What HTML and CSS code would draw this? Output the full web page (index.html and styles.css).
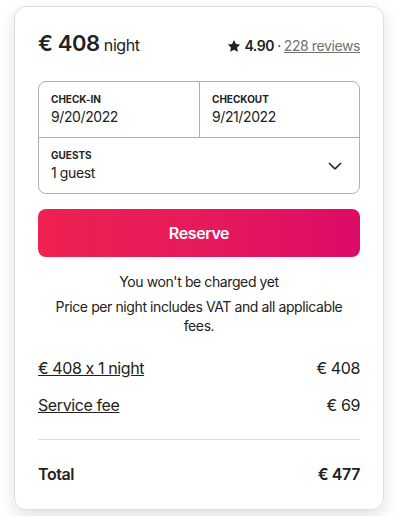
FILE: index.html
```html
<!DOCTYPE html>
<html>
<head>
<meta charset="utf-8">
<link rel="stylesheet" href="styles.css">
</head>
<body>
<div class="card">
  <div class="head">
    <div class="price"><span class="amount">€ 408</span> <span class="per">night</span></div>
    <div class="rating">
      <svg class="star" viewBox="0 0 32 32" width="12" height="12"><path d="M15.094 1.579l-4.124 8.885-9.86 1.27a1 1 0 0 0-.542 1.736l7.293 6.565-1.965 9.852a1 1 0 0 0 1.483 1.061L16 25.951l8.625 4.997a1 1 0 0 0 1.482-1.06l-1.965-9.853 7.293-6.565a1 1 0 0 0-.541-1.735l-9.86-1.271-4.127-8.885a1 1 0 0 0-1.814 0z" fill="#222"/></svg>
      <span class="score">4.90</span><span class="dot">·</span><a class="reviews">228 reviews</a>
    </div>
  </div>
  <div class="box">
    <div class="dates">
      <div class="cell">
        <div class="label">CHECK-IN</div>
        <div class="value">9/20/2022</div>
      </div>
      <div class="cell right">
        <div class="label">CHECKOUT</div>
        <div class="value">9/21/2022</div>
      </div>
    </div>
    <div class="guests">
      <div>
        <div class="label">GUESTS</div>
        <div class="value">1 guest</div>
      </div>
      <svg class="chev" viewBox="0 0 32 32" width="16" height="16"><path d="M28 12 16.7 23.3a1 1 0 0 1-1.4 0L4 12" fill="none" stroke="#222" stroke-width="3"/></svg>
    </div>
  </div>
  <button class="reserve">Reserve</button>
  <p class="note">You won't be charged yet</p>
  <p class="note vat">Price per night includes VAT and all applicable fees.</p>
  <div class="line first"><a>€ 408 x 1 night</a><span>€ 408</span></div>
  <div class="line"><a>Service fee</a><span>€ 69</span></div>
  <div class="total"><span>Total</span><span>€ 477</span></div>
</div>
</body>
</html>
```

FILE: styles.css
```css
* { box-sizing: border-box; }
html, body { margin: 0; background: #fff; }
body {
  padding: 6px 20px 8px 14px;
  font-family: Inter, "Noto Sans", sans-serif;
  font-feature-settings: "calt" 0;
  letter-spacing: -0.025em;
  color: #222;
}
.card {
  width: 370px;
  border: 1px solid #dddddd;
  border-radius: 12px;
  padding: 23px 23px 25px;
  box-shadow: rgba(0, 0, 0, 0.12) 0 6px 16px;
}
.head {
  display: flex;
  justify-content: space-between;
  align-items: baseline;
  height: 28px;
  margin-bottom: 23px;
}
.amount { font-size: 22px; font-weight: 600; }
.per { font-size: 16px; }
.rating { font-size: 14px; display: flex; align-items: baseline; }
.star { margin-right: 4px; align-self: center; }
.score { font-weight: 600; }
.dot { margin: 0 3px; color: #222; }
.reviews { color: #717171; text-decoration: underline; }
.box {
  border: 1px solid #b0b0b0;
  border-radius: 8px;
}
.dates {
  display: grid;
  grid-template-columns: 1fr 1fr;
  border-bottom: 1px solid #b0b0b0;
}
.cell { padding: 10px 12px; height: 55px; }
.cell.right { border-left: 1px solid #b0b0b0; }
.label { font-size: 10px; font-weight: 700; line-height: 14px; letter-spacing: 0; }
.value { font-size: 14px; line-height: 18px; margin-top: 2px; }
.guests {
  display: flex;
  justify-content: space-between;
  align-items: center;
  padding: 8px 12px 10px;
  height: 55px;
}
.chev { margin-right: 4px; }
.reserve {
  display: block;
  width: 100%;
  height: 48px;
  margin-top: 15px;
  border: 0;
  border-radius: 8px;
  background: linear-gradient(to right, #ee2150 0%, #e71a5c 50%, #dc0b67 100%);
  color: #fff;
  font-family: inherit;
  letter-spacing: inherit;
  font-size: 16px;
  font-weight: 600;
}
.note {
  margin: 16px 0 0;
  text-align: center;
  font-size: 14px;
  line-height: 18px;
}
.note.vat { margin-top: 6px; padding: 0 10px; line-height: 19px; }
.line {
  display: flex;
  justify-content: space-between;
  font-size: 16px;
  line-height: 20px;
  margin-top: 17px;
}
.line.first { margin-top: 23px; }
.line a { text-decoration: underline; }
.total {
  display: flex;
  justify-content: space-between;
  font-size: 16px;
  font-weight: 600;
  line-height: 20px;
  margin-top: 24px;
  padding-top: 24px;
  border-top: 1px solid #dddddd;
}
```
